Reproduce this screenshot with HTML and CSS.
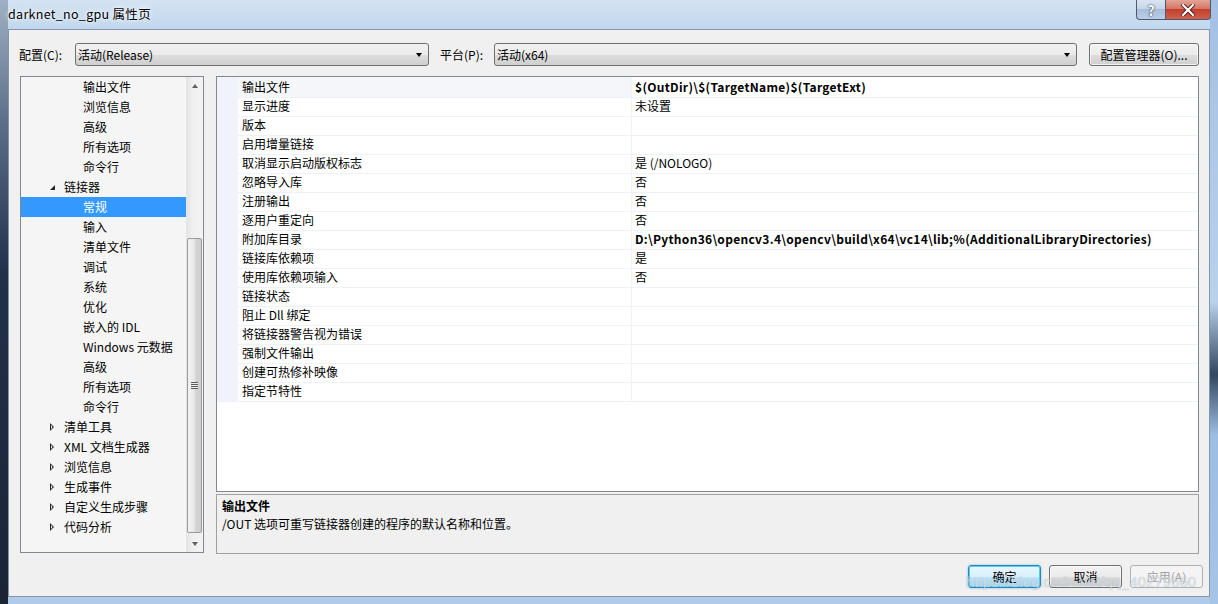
FILE: index.html
```html
<!DOCTYPE html>
<html lang="zh-CN">
<head>
<meta charset="UTF-8">
<title>darknet_no_gpu 属性页</title>
<link rel="stylesheet" href="styles.css">
</head>
<body>
<div class="window">
  <div class="titlebar">
    <div class="title">darknet_no_gpu 属性页</div>
    <div class="caption-buttons">
      <div class="cap-btn help">?</div>
      <div class="cap-btn close">
        <svg width="14" height="12" viewBox="0 0 14 12"><path d="M2 1 L12 11 M12 1 L2 11" stroke="#4a1a1a" stroke-width="4" stroke-linecap="square"/><path d="M2 1 L12 11 M12 1 L2 11" stroke="#fff" stroke-width="2.2" stroke-linecap="square"/></svg>
      </div>
    </div>
  </div>

  <div class="client">
    <div class="toolbar">
      <div class="tb-label cfg">配置(C):</div>
      <div class="combo combo-cfg">
        <span>活动(Release)</span>
        <span class="drop"></span>
      </div>
      <div class="tb-label plat">平台(P):</div>
      <div class="combo combo-plat">
        <span>活动(x64)</span>
        <span class="drop"></span>
      </div>
      <div class="btn mgr">配置管理器(O)...</div>
    </div>

    <div class="main">
      <div class="tree">
        <div class="tree-items">
          <div class="node lvl2">输出文件</div>
          <div class="node lvl2">浏览信息</div>
          <div class="node lvl2">高级</div>
          <div class="node lvl2">所有选项</div>
          <div class="node lvl2">命令行</div>
          <div class="node lvl1"><span class="tw open"></span>链接器</div>
          <div class="node lvl2 selected">常规</div>
          <div class="node lvl2">输入</div>
          <div class="node lvl2">清单文件</div>
          <div class="node lvl2">调试</div>
          <div class="node lvl2">系统</div>
          <div class="node lvl2">优化</div>
          <div class="node lvl2">嵌入的 IDL</div>
          <div class="node lvl2">Windows 元数据</div>
          <div class="node lvl2">高级</div>
          <div class="node lvl2">所有选项</div>
          <div class="node lvl2">命令行</div>
          <div class="node lvl1"><span class="tw closed"></span>清单工具</div>
          <div class="node lvl1"><span class="tw closed"></span>XML 文档生成器</div>
          <div class="node lvl1"><span class="tw closed"></span>浏览信息</div>
          <div class="node lvl1"><span class="tw closed"></span>生成事件</div>
          <div class="node lvl1"><span class="tw closed"></span>自定义生成步骤</div>
          <div class="node lvl1"><span class="tw closed"></span>代码分析</div>
        </div>
        <div class="vscroll">
          <div class="sb-arrow up"></div>
          <div class="sb-track">
            <div class="sb-thumb"><span class="grip"></span></div>
          </div>
          <div class="sb-arrow down"></div>
        </div>
      </div>

      <div class="right">
        <div class="grid">
          <div class="row current"><span class="gut"></span><span class="name">输出文件</span><span class="val bold">$(OutDir)\$(TargetName)$(TargetExt)</span></div>
          <div class="row"><span class="gut"></span><span class="name">显示进度</span><span class="val">未设置</span></div>
          <div class="row"><span class="gut"></span><span class="name">版本</span><span class="val"></span></div>
          <div class="row"><span class="gut"></span><span class="name">启用增量链接</span><span class="val"></span></div>
          <div class="row"><span class="gut"></span><span class="name">取消显示启动版权标志</span><span class="val">是 (/NOLOGO)</span></div>
          <div class="row"><span class="gut"></span><span class="name">忽略导入库</span><span class="val">否</span></div>
          <div class="row"><span class="gut"></span><span class="name">注册输出</span><span class="val">否</span></div>
          <div class="row"><span class="gut"></span><span class="name">逐用户重定向</span><span class="val">否</span></div>
          <div class="row"><span class="gut"></span><span class="name">附加库目录</span><span class="val bold">D:\Python36\opencv3.4\opencv\build\x64\vc14\lib;%(AdditionalLibraryDirectories)</span></div>
          <div class="row"><span class="gut"></span><span class="name">链接库依赖项</span><span class="val">是</span></div>
          <div class="row"><span class="gut"></span><span class="name">使用库依赖项输入</span><span class="val">否</span></div>
          <div class="row"><span class="gut"></span><span class="name">链接状态</span><span class="val"></span></div>
          <div class="row"><span class="gut"></span><span class="name">阻止 Dll 绑定</span><span class="val"></span></div>
          <div class="row"><span class="gut"></span><span class="name">将链接器警告视为错误</span><span class="val"></span></div>
          <div class="row"><span class="gut"></span><span class="name">强制文件输出</span><span class="val"></span></div>
          <div class="row"><span class="gut"></span><span class="name">创建可热修补映像</span><span class="val"></span></div>
          <div class="row"><span class="gut"></span><span class="name">指定节特性</span><span class="val"></span></div>
        </div>
        <div class="desc">
          <div class="desc-title">输出文件</div>
          <div class="desc-text">/OUT 选项可重写链接器创建的程序的默认名称和位置。</div>
        </div>
      </div>
    </div>

    <div class="footer">
      <div class="btn ok">确定</div>
      <div class="btn">取消</div>
      <div class="btn disabled">应用(A)</div>
    </div>
  </div>

  <div class="watermark">https://blog.csdn.net/qq_40279560</div>
</div>
</body>
</html>
```

FILE: styles.css
```css
* {
  margin: 0;
  padding: 0;
  box-sizing: border-box;
}

body {
  width: 1218px;
  height: 604px;
  overflow: hidden;
  font-family: "Noto Sans CJK SC", "Noto Sans", sans-serif;
  font-size: 12px;
  color: #000;
}

/* Aero glass frame */
.window {
  position: relative;
  width: 1218px;
  height: 604px;
  padding: 0 8px 7px 8px;
  display: flex;
  flex-direction: column;
  background:
    linear-gradient(to bottom, #9fb0c4 0, #5d6f88 20%, #22304a 45%, #1b2536 100%) left top / 8px 100% no-repeat,
    linear-gradient(to bottom, #a3c0e3 0, #b9d1ec 50%, #33475f 62%, #9dbde2 72%, #a6c4e6 100%) right top / 8px 100% no-repeat,
    linear-gradient(to bottom, #d4e3f3 0, #c0d6ee 5%, #b0cbe9 100%);
}

.titlebar {
  height: 29px;
  display: flex;
  justify-content: space-between;
  align-items: flex-start;
}

.title {
  margin-top: 6px;
  font-size: 12.5px;
  line-height: 16px;
  letter-spacing: 0.3px;
  color: #000;
  text-shadow: 0 0 6px #fff, 0 0 3px #fff;
}

.caption-buttons {
  display: flex;
  margin-right: -1px;
}

.cap-btn {
  height: 20px;
  display: flex;
  align-items: center;
  justify-content: center;
  border: 1px solid #4d5a6b;
  border-top: none;
}

.cap-btn.help {
  width: 29px;
  border-radius: 0 0 0 4px;
  border-right: none;
  background: linear-gradient(to bottom, #d9e4f1 0, #c6d6e9 45%, #a9bed8 50%, #b8cde6 100%);
  color: #fff;
  font-size: 14px;
  font-weight: bold;
  text-shadow: 0 0 2px #2a3a50, 0 0 1px #2a3a50;
}

.cap-btn.close {
  width: 46px;
  border-radius: 0 0 4px 0;
  background: linear-gradient(to bottom, #e3a595 0, #d47766 45%, #c2402c 50%, #d0604c 100%);
}

.client {
  flex: 1;
  background: #f0f0f0;
  border: 1px solid #8596aa;
  padding: 13px 10px 0 11px;
  display: flex;
  flex-direction: column;
}

/* Configuration / platform row */
.toolbar {
  display: flex;
  align-items: center;
  height: 23px;
}

.tb-label {
  line-height: 23px;
}

.tb-label.cfg {
  width: 56px;
  margin-left: -1px;
}

.tb-label.plat {
  width: 54px;
  margin-left: 11px;
}

.combo {
  height: 23px;
  border: 1px solid #707070;
  border-radius: 3px;
  background: linear-gradient(to bottom, #f2f2f2 0, #ebebeb 50%, #dddddd 51%, #cfcfcf 100%);
  display: flex;
  align-items: center;
  justify-content: space-between;
  padding: 0 6px 0 2px;
  line-height: 21px;
}

.combo-cfg {
  width: 354px;
}

.combo-plat {
  width: 583px;
}

.drop {
  width: 0;
  height: 0;
  border-left: 3.5px solid transparent;
  border-right: 3.5px solid transparent;
  border-top: 4px solid #000;
  margin-top: 1px;
}

.btn {
  height: 23px;
  width: 73px;
  border: 1px solid #707070;
  border-radius: 3px;
  background: linear-gradient(to bottom, #f2f2f2 0, #ebebeb 50%, #dddddd 51%, #cfcfcf 100%);
  display: flex;
  align-items: center;
  justify-content: center;
  line-height: 21px;
  box-shadow: inset 0 0 0 1px rgba(255, 255, 255, 0.7);
}

.btn.mgr {
  width: 110px;
  margin-left: 12px;
}

.main {
  display: flex;
  margin-top: 10px;
  height: 478px;
}

/* Left navigation tree */
.tree {
  width: 184px;
  height: 477px;
  border: 1px solid #828790;
  background: #f5f5f5;
  display: flex;
}

.tree-items {
  flex: 1;
  overflow: hidden;
}

.node {
  height: 20px;
  line-height: 20px;
  white-space: nowrap;
  display: flex;
  align-items: center;
}

.node.lvl1 {
  padding-left: 28px;
}

.node.lvl2 {
  padding-left: 62px;
}

.node.selected {
  background: #3399ff;
  color: #fff;
}

.tw {
  width: 15px;
  height: 20px;
  display: inline-flex;
  align-items: center;
}

.tw.open::before {
  content: '';
  width: 0;
  height: 0;
  border-left: 5px solid transparent;
  border-bottom: 5px solid #262626;
  margin-left: 1px;
}

.tw.closed::before {
  content: '';
  width: 4px;
  height: 8px;
  margin-left: 1px;
  background: #262626;
  clip-path: polygon(0 0, 100% 50%, 0 100%, 0 0, 1px 2px, 1px calc(100% - 2px), calc(100% - 1.5px) 50%, 1px 2px);
}

.vscroll {
  width: 17px;
  display: flex;
  flex-direction: column;
  background: linear-gradient(to right, #e3e3e3, #f0f0f0 40%, #f3f3f3);
}

.sb-arrow {
  height: 17px;
  display: flex;
  align-items: center;
  justify-content: center;
}

.sb-arrow::before {
  content: '';
  width: 0;
  height: 0;
  border-left: 3.5px solid transparent;
  border-right: 3.5px solid transparent;
}

.sb-arrow.up::before {
  border-bottom: 4px solid #606060;
}

.sb-arrow.down::before {
  border-top: 4px solid #606060;
}

.sb-track {
  flex: 1;
  padding: 144px 1px 2px 1px;
}

.sb-thumb {
  height: 295px;
  border: 1px solid #9b9b9b;
  border-radius: 2px;
  background: linear-gradient(to right, #f3f3f3, #e6e6e6 50%, #d6d6d6 51%, #cfcfcf);
  display: flex;
  align-items: center;
  justify-content: center;
}

.grip {
  width: 7px;
  height: 7px;
  background: repeating-linear-gradient(to bottom, #5b5b5b 0, #5b5b5b 1px, #f0f0f0 1px, #f0f0f0 2px);
}

/* Property grid */
.right {
  margin-left: 12px;
  width: 983px;
  display: flex;
  flex-direction: column;
}

.grid {
  height: 416px;
  border: 1px solid #828790;
  background: #fff;
}

.row {
  display: grid;
  grid-template-columns: 21px 394px 1fr;
  height: 19px;
  line-height: 20px;
}

.gut {
  background: #f0f4fa;
}

.name {
  padding-left: 4px;
  border-bottom: 1px solid #eef2f8;
  border-right: 1px solid #eef2f8;
  white-space: nowrap;
}

.val {
  padding-left: 3px;
  border-bottom: 1px solid #eef2f8;
  white-space: nowrap;
}

.row.current .name {
  background: #f4f6fa;
}

.bold {
  font-weight: bold;
  letter-spacing: 0.3px;
}

.desc {
  margin-top: 2px;
  height: 60px;
  border: 1px solid #a0a0a0;
  background: #f0f0f0;
  padding: 2px 5px;
  line-height: 18px;
}

.desc-title {
  font-weight: bold;
}

/* Dialog buttons */
.footer {
  display: flex;
  justify-content: flex-end;
  gap: 8px;
  margin-top: 11px;
  margin-right: -4px;
}

.btn.ok {
  border-color: #3c7fb1;
  background: linear-gradient(to bottom, #eaf6fd 0, #d9f0fc 50%, #bee6fd 51%, #a7d9f5 100%);
  box-shadow: inset 0 0 0 1px #48d1f8, 0 0 2px #5ab0e8;
}

.btn.disabled {
  border-color: #adb2b5;
  background: #f4f4f4;
  color: #a0a0a0;
  box-shadow: none;
}

.watermark {
  position: absolute;
  left: 966px;
  top: 573px;
  font-family: "Liberation Sans", sans-serif;
  font-size: 15px;
  color: rgba(255, 255, 255, 0.55);
  text-shadow: 0 0 1px rgba(110, 130, 150, 0.6);
  white-space: nowrap;
}
```
